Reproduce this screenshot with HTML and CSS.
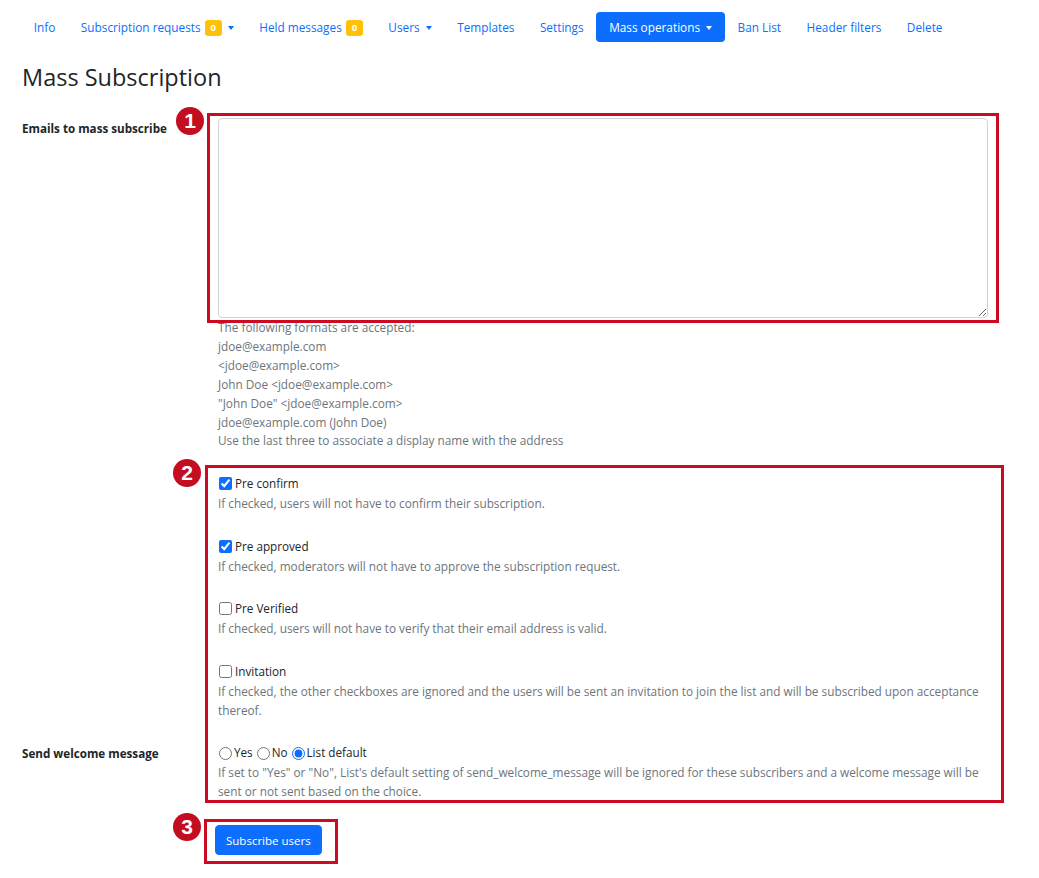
FILE: index.html
```html
<!DOCTYPE html>
<html lang="en">
<head>
<meta charset="utf-8">
<title>Mass Subscription</title>
<link rel="stylesheet" href="styles.css">
</head>
<body>
<nav class="tabs">
  <a class="tab" href="#">Info</a>
  <a class="tab" href="#">Subscription requests <span class="badge">0</span><span class="caret"></span></a>
  <a class="tab" href="#">Held messages <span class="badge">0</span></a>
  <a class="tab" href="#">Users<span class="caret"></span></a>
  <a class="tab" href="#">Templates</a>
  <a class="tab" href="#">Settings</a>
  <a class="tab tab-active" href="#">Mass operations<span class="caret"></span></a>
  <a class="tab" href="#">Ban List</a>
  <a class="tab" href="#">Header filters</a>
  <a class="tab" href="#">Delete</a>
</nav>
<main class="page">
  <h2 class="title">Mass Subscription</h2>
  <form class="form">
    <label class="row-label r1" for="emails">Emails to mass subscribe</label>
    <div class="field r1">
      <div class="annot annot-1">
        <textarea id="emails" class="textarea"></textarea>
        <span class="marker">1</span>
      </div>
      <div class="help">The following formats are accepted:<br>jdoe@example.com<br>&lt;jdoe@example.com&gt;<br>John Doe &lt;jdoe@example.com&gt;<br>"John Doe" &lt;jdoe@example.com&gt;<br>jdoe@example.com (John Doe)<br>Use the last three to associate a display name with the address</div>
    </div>

    <div class="field r2">
      <label class="check"><input type="checkbox" checked> Pre confirm</label>
      <div class="help">If checked, users will not have to confirm their subscription.</div>
    </div>
    <div class="field r3">
      <label class="check"><input type="checkbox" checked> Pre approved</label>
      <div class="help">If checked, moderators will not have to approve the subscription request.</div>
    </div>
    <div class="field r4">
      <label class="check"><input type="checkbox"> Pre Verified</label>
      <div class="help">If checked, users will not have to verify that their email address is valid.</div>
    </div>
    <div class="field r5">
      <label class="check"><input type="checkbox"> Invitation</label>
      <div class="help">If checked, the other checkboxes are ignored and the users will be sent an invitation to join the list and will be subscribed upon acceptance thereof.</div>
    </div>

    <div class="row-label r6">Send welcome message</div>
    <div class="field r6">
      <div class="radios">
        <label class="radio"><input type="radio" name="welcome">Yes</label>
        <label class="radio"><input type="radio" name="welcome">No</label>
        <label class="radio"><input type="radio" name="welcome" checked>List default</label>
      </div>
      <div class="help">If set to "Yes" or "No", List's default setting of send_welcome_message will be ignored for these subscribers and a welcome message will be sent or not sent based on the choice.</div>
    </div>

    <div class="annot annot-2"><span class="marker">2</span></div>

    <div class="field r7">
      <div class="annot annot-3">
        <button type="button" class="btn">Subscribe users</button>
        <span class="marker">3</span>
      </div>
    </div>
  </form>
</main>
</body>
</html>
```

FILE: styles.css
```css
html, body {
  margin: 0;
  padding: 0;
  background: #fff;
}
body {
  font-family: "Open Sans", "Noto Sans", "DejaVu Sans", sans-serif;
  font-size: 12px;
  line-height: 21.6px;
  color: #212529;
}

/* ---------- nav ---------- */
.tabs {
  display: flex;
  align-items: center;
  padding: 12px 0 0 21px;
}
.tab {
  display: flex;
  align-items: center;
  box-sizing: border-box;
  height: 30px;
  padding: 1px 12.75px 0;
  font-size: 11.8px;
  color: #0d6efd;
  text-decoration: none;
  border-radius: 4px;
  white-space: pre;
}
.tab-active {
  background: #0d6efd;
  color: #fff;
}
.badge {
  display: inline-flex;
  align-items: center;
  justify-content: center;
  width: 17px;
  height: 16px;
  margin-left: 1px;
  border-radius: 3px;
  background: #ffc107;
  color: #fff;
  font-size: 9.5px;
  font-weight: 700;
  line-height: 1;
}
.caret {
  display: inline-block;
  width: 0;
  height: 0;
  margin-left: 6px;
  border-top: 4px solid currentColor;
  border-left: 3.5px solid transparent;
  border-right: 3.5px solid transparent;
  margin-top: 1px;
}

/* ---------- page ---------- */
.page {
  padding: 0 51px 40px 22px;
}
.title {
  margin: 20px 0 0;
  font-size: 23.5px;
  line-height: 30px;
  font-weight: 400;
  color: #212529;
}

.form {
  position: relative;
  display: grid;
  grid-template-columns: 196px 1fr;
  row-gap: 23.1px;
  margin-top: 25px;
}
.row-label {
  grid-column: 1;
  font-weight: 700;
  font-size: 11.65px;
  line-height: 21.6px;
}
.r1.row-label {
  padding-top: 1px;
}
.field {
  grid-column: 2;
  min-width: 0;
}
.r1 { grid-row: 1; }
.r2 { grid-row: 2; }
.r3 { grid-row: 3; }
.r4 { grid-row: 4; }
.r5 { grid-row: 5; }
.r6 { grid-row: 6; }
.r7 { grid-row: 7; }

.textarea {
  display: block;
  box-sizing: border-box;
  width: 100%;
  height: 200px;
  margin: 1px 0 0;
  border: 1px solid #ced4da;
  border-radius: 4px;
  font: inherit;
  resize: vertical;
  background: #fff;
}
.help {
  font-size: 11.8px;
  line-height: 18.9px;
  color: #6c757d;
}

.check, .radios {
  display: flex;
  align-items: center;
  height: 20.6px;
  font-size: 11.7px;
}
.check input {
  width: 13px;
  height: 13px;
  margin: 0 3px 0 1px;
  accent-color: #0d6efd;
}
.radio {
  display: inline-flex;
  align-items: center;
  margin-right: 3px;
}
.radio input {
  width: 13px;
  height: 13px;
  margin: 0 2px 0 1px;
  accent-color: #0d6efd;
}

.btn {
  display: block;
  height: 30px;
  margin: 1px 0 0 -3px;
  padding: 0 10px;
  border: 1px solid #0d6efd;
  border-radius: 4px;
  background: #0d6efd;
  color: #fff;
  font-family: inherit;
  font-size: 11.5px;
}

/* ---------- annotation overlays ---------- */
.annot {
  position: relative;
}
.annot-1, .annot-3 {
  display: block;
}
.annot-3 {
  width: max-content;
}
.annot::after {
  content: "";
  position: absolute;
  border: 3px solid #cc0a22;
  pointer-events: none;
}
.annot-1::after {
  top: -5px;
  left: -11px;
  right: -11px;
  bottom: -5px;
}
.annot-2 {
  grid-column: 2;
  grid-row: 2 / 7;
  position: absolute;
  top: -8px;
  left: -13px;
  right: -16px;
  bottom: -1.5px;
  pointer-events: none;
}
.annot-2::after {
  inset: 0;
}
.annot-3::after {
  top: -6px;
  left: -14px;
  right: -16px;
  bottom: -9px;
}
.marker {
  position: absolute;
  z-index: 2;
  width: 28px;
  height: 28px;
  border-radius: 50%;
  background: #c30d20;
  color: #fff;
  font-family: "Liberation Sans", Arial, sans-serif;
  font-weight: 700;
  font-size: 21px;
  line-height: 28px;
  text-align: center;
}
.annot-1 .marker { top: -11px; left: -42px; }
.annot-2 .marker { top: -6px; left: -32px; }
.annot-3 .marker { top: -12px; left: -45px; }
```
